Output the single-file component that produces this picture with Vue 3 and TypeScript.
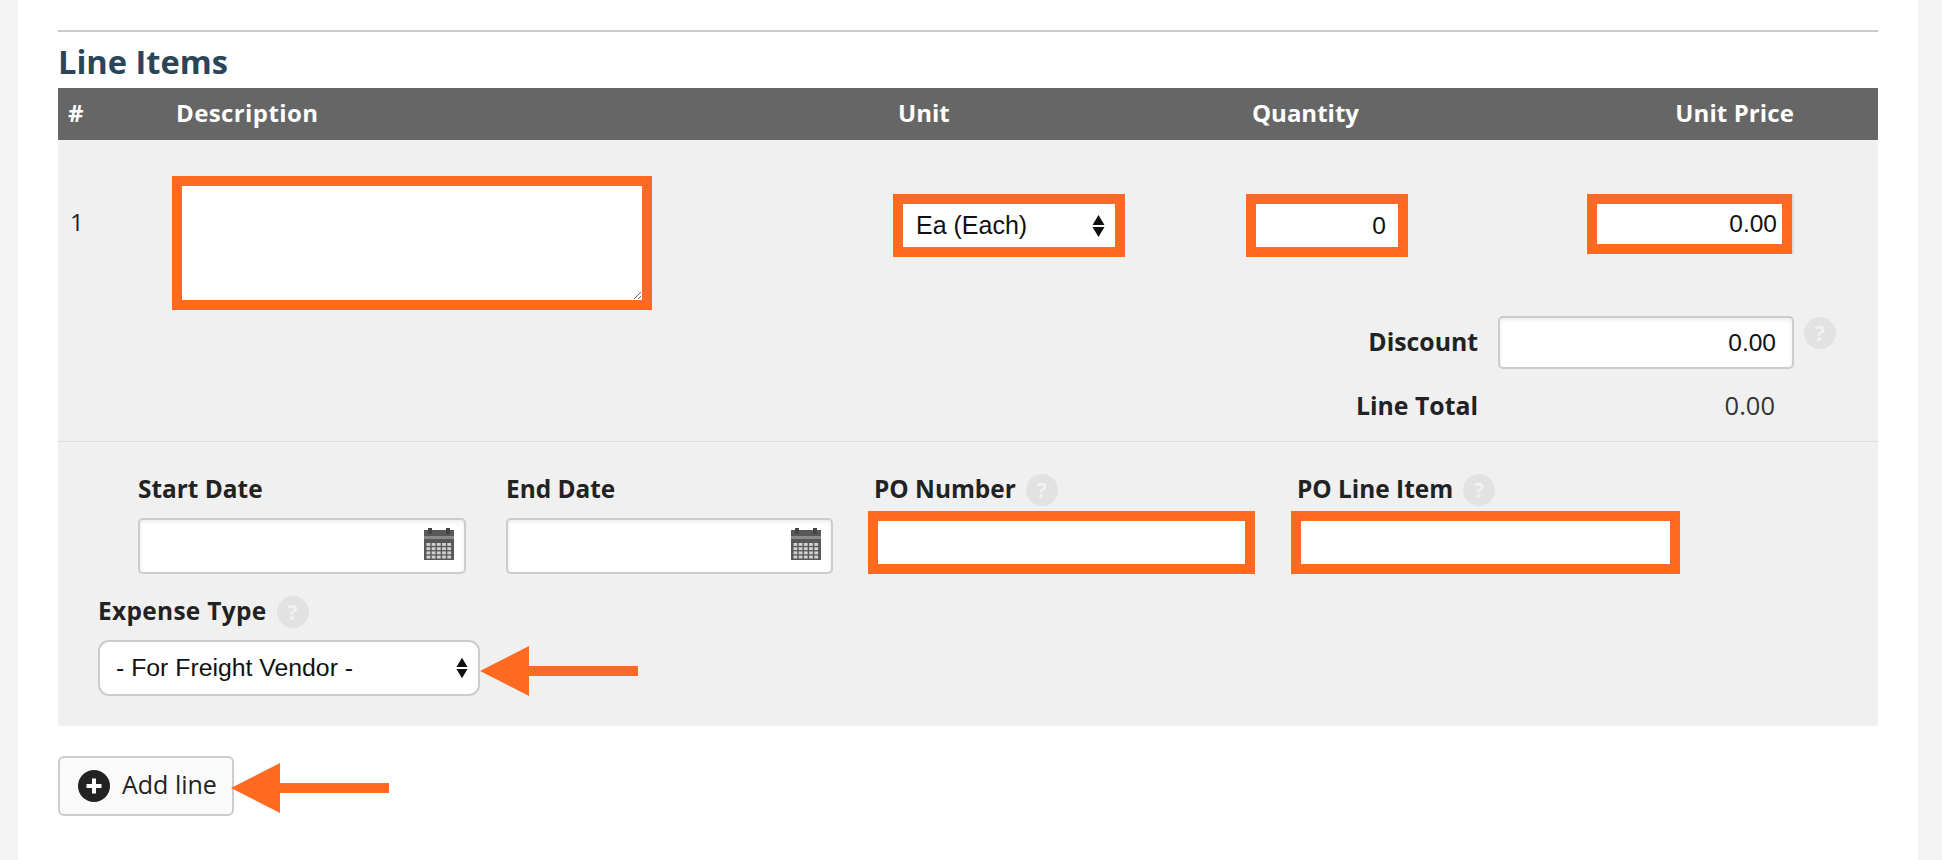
<script setup lang="ts">
const calendarCells: { x: number; y: number }[] = [];
for (let r = 0; r < 4; r++) {
  for (let c = 0; c < 5; c++) {
    calendarCells.push({ x: 2.5 + c * 5.2, y: 15 + r * 4.2 });
  }
}
const dateFields = ['Start Date', 'End Date'];
const poFields = [
  { label: 'PO Number', cls: 'po-number' },
  { label: 'PO Line Item', cls: 'po-line' },
];
</script>

<template>
  <div class="page">
    <main class="sheet">
      <hr class="rule" />
      <h2 class="title">Line Items</h2>

      <div class="cols head">
        <div class="h-num">#</div>
        <div class="h-desc">Description</div>
        <div class="h-unit">Unit</div>
        <div class="h-qty">Quantity</div>
        <div class="h-price">Unit Price</div>
      </div>

      <section class="panel">
        <div class="upper">
          <div class="cols item">
            <div class="num">1</div>
            <textarea class="desc marked"></textarea>
            <div class="select-wrap unit-wrap">
              <select class="unit marked">
                <option>Ea (Each)</option>
              </select>
              <svg class="updown" width="13" height="22" viewBox="0 0 13 22">
                <path d="M6.5 0L12.5 10H.5zM.5 12H12.5L6.5 22z" fill="#111" />
              </svg>
            </div>
            <input class="qty marked" type="text" value="0" />
            <input class="price marked" type="text" value="0.00" />
          </div>

          <div class="total-row discount-row">
            <label class="side-label">Discount</label>
            <input class="field discount" type="text" value="0.00" />
            <span class="help">?</span>
          </div>
          <div class="total-row line-total">
            <span class="side-label">Line Total</span>
            <span class="total-value">0.00</span>
          </div>
        </div>

        <div class="lower">
          <div class="fields">
            <div v-for="f in dateFields" :key="f" class="date-field">
              <div class="label-row"><label class="lbl">{{ f }}</label></div>
              <div class="date-box">
                <input class="field date" type="text" />
                <svg class="cal" width="30" height="32" viewBox="0 0 30 32">
                  <rect y="2" width="30" height="30" fill="#585858" />
                  <rect x="4" width="4" height="6" fill="#444" />
                  <rect x="22" width="4" height="6" fill="#444" />
                  <rect y="8" width="30" height="3" fill="#8a8a8a" />
                  <rect
                    v-for="(c, i) in calendarCells"
                    :key="i"
                    :x="c.x"
                    :y="c.y"
                    width="3.8"
                    height="2.9"
                    fill="#d0d0d0"
                  />
                </svg>
              </div>
            </div>
            <div v-for="f in poFields" :key="f.label" class="po-field" :class="f.cls">
              <div class="label-row">
                <label class="lbl">{{ f.label }}</label>
                <span class="help">?</span>
              </div>
              <input class="po marked" type="text" />
            </div>
          </div>

          <div class="expense">
            <div class="label-row">
              <label class="lbl expense-lbl">Expense Type</label>
              <span class="help">?</span>
            </div>
            <div class="select-wrap expense-wrap">
              <select class="expense-select">
                <option>- For Freight Vendor -</option>
              </select>
              <svg class="updown" width="12" height="22" viewBox="0 0 13 22">
                <path d="M6.5 0L12.5 10H.5zM.5 12H12.5L6.5 22z" fill="#111" />
              </svg>
              <svg class="arrow arrow-expense" width="158" height="50" viewBox="0 0 158 50">
                <path d="M0 25L49 0V20L158 20V30L49 30V50z" fill="#fe6a22" />
              </svg>
            </div>
          </div>
        </div>
      </section>

      <div class="add-wrap">
        <button class="add" type="button">
          <svg width="32" height="32" viewBox="0 0 32 32">
            <circle cx="16" cy="16" r="16" fill="#222" />
            <path d="M16 8.5V23.5M8.5 16H23.5" stroke="#fff" stroke-width="4" />
          </svg>
          <span class="add-text">Add line</span>
        </button>
        <svg class="arrow arrow-add" width="158" height="50" viewBox="0 0 158 50">
          <path d="M0 25L49 0V20L158 20V30L49 30V50z" fill="#fe6a22" />
        </svg>
      </div>
    </main>
  </div>
</template>

<style scoped>
.page {
  height: 860px;
  overflow: hidden;
  background: #f4f4f4;
  padding: 0 24px 0 18px;
  box-sizing: border-box;
  font-family: "Open Sans", "DejaVu Sans", sans-serif;
  color: #222;
}
.sheet {
  height: 860px;
  background: #fff;
  padding: 30px 40px 0;
  box-sizing: border-box;
}
.rule {
  margin: 0;
  border: 0;
  height: 2px;
  background: #ccc;
}
.title {
  margin: 0;
  height: 56px;
  line-height: 60px;
  font-size: 32.6px;
  font-weight: 700;
  color: #2a4558;
}
.cols {
  display: grid;
  grid-template-columns: 114px 721px 353px 341px 1fr;
}
.head {
  height: 52px;
  line-height: 50px;
  background: #666;
  color: #fff;
  font-size: 24px;
  font-weight: 700;
}
.h-num { padding-left: 10px; }
.h-desc { padding-left: 4px; letter-spacing: 0.4px; }
.h-unit { padding-left: 5px; }
.h-qty { padding-left: 6px; }
.h-price { text-align: right; padding-right: 84px; letter-spacing: 0.1px; }

.panel { background: #f0f0f0; }
.upper {
  height: 302px;
  padding-top: 36px;
  box-sizing: border-box;
  border-bottom: 1px solid #ddd;
}
.item { height: 134px; align-items: start; }
.num {
  padding-left: 12px;
  margin-top: 29px;
  line-height: 34px;
  font-size: 24px;
}
.marked {
  border: 10px solid #fe6a22;
  border-radius: 0;
  background: #fff;
  box-sizing: border-box;
  outline: 0;
  margin: 0;
  font-family: "Liberation Sans", Arial, sans-serif;
  font-size: 24.5px;
  color: #111;
}
.desc {
  display: block;
  width: 480px;
  height: 134px;
  padding: 0;
  resize: both;
}
.select-wrap { position: relative; }
.unit-wrap {
  width: 232px;
  height: 63px;
  margin-top: 18px;
}
.unit {
  display: block;
  width: 100%;
  height: 100%;
  padding: 0 0 2px 13px;
  font-size: 25px;
  appearance: none;
}
.updown {
  position: absolute;
  top: 50%;
  right: 20px;
  transform: translateY(-50%);
  pointer-events: none;
}
.qty {
  width: 162px;
  height: 63px;
  margin-top: 18px;
  padding: 0 12px 0 0;
  text-align: right;
}
.price {
  width: 205px;
  height: 60px;
  margin-top: 18px;
  padding: 0 5px 0 0;
  text-align: right;
  box-shadow: 2px 0 0 #ddd;
}
.total-row {
  display: flex;
  align-items: center;
  justify-content: flex-end;
  padding-right: 42px;
}
.discount-row {
  height: 53px;
  margin-top: 6px;
  gap: 20px;
}
.discount-row .help { margin: -19px 0 0 -10px; }
.side-label {
  padding-bottom: 4px;
  font-size: 24.8px;
  font-weight: 700;
  color: #222;
}
.field {
  border: 2px solid #ccc;
  border-radius: 5px;
  background: #fff;
  box-sizing: border-box;
  box-shadow: inset 0 2px 4px rgba(0, 0, 0, 0.08);
  outline: 0;
  margin: 0;
  font-family: "Liberation Sans", Arial, sans-serif;
  font-size: 24.5px;
  color: #111;
}
.discount {
  width: 296px;
  height: 53px;
  padding: 0 16px 0 0;
  text-align: right;
}
.help {
  display: inline-block;
  flex: none;
  width: 32px;
  height: 32px;
  line-height: 32px;
  border-radius: 50%;
  background: #e2e2e2;
  color: #f2f2f2;
  text-align: center;
  font-size: 21px;
  font-weight: 700;
}
.line-total {
  height: 30px;
  margin-top: 23px;
  gap: 20px;
  padding-right: 103px;
}
.total-value {
  width: 277px;
  padding-bottom: 4px;
  text-align: right;
  font-size: 25.5px;
  color: #333;
}
.lower {
  height: 284px;
  padding: 32px 0 0 40px;
  box-sizing: border-box;
}
.fields {
  display: flex;
  align-items: flex-start;
  margin-left: 40px;
}
.label-row {
  display: flex;
  align-items: center;
  gap: 10px;
  height: 32px;
}
.lbl {
  padding-bottom: 4px;
  font-size: 24.4px;
  font-weight: 700;
  color: #222;
}
.expense-lbl { letter-spacing: 0.35px; }
.date-field { width: 328px; margin-right: 40px; }
.date-field + .date-field { width: 327px; margin-right: 35px; }
.date-box {
  position: relative;
  margin-top: 12px;
}
.field.date {
  display: block;
  width: 100%;
  height: 56px;
}
.cal {
  position: absolute;
  top: 10px;
  right: 12px;
}
.po-field .label-row { padding-left: 6px; }
.po-number { width: 387px; margin-right: 36px; }
.po-line { width: 389px; }
.po {
  display: block;
  width: 100%;
  height: 63px;
  margin-top: 5px;
  padding: 0 8px;
}
.expense { margin-top: 22px; }
.expense-wrap {
  width: 382px;
  height: 56px;
  margin-top: 12px;
}
.expense-select {
  display: block;
  width: 100%;
  height: 100%;
  border: 2px solid #ccc;
  border-radius: 11px;
  background: #fff;
  box-sizing: border-box;
  padding: 0 0 2px 16px;
  appearance: none;
  outline: 0;
  font-family: "Liberation Sans", Arial, sans-serif;
  font-size: 24.8px;
  color: #111;
}
.expense-wrap .updown { right: 12px; }
.arrow {
  position: absolute;
  top: 50%;
  transform: translateY(-50%);
}
.arrow-expense { left: 100%; margin-top: 3px; }
.add-wrap {
  position: relative;
  width: 176px;
  height: 60px;
  margin-top: 30px;
}
.add {
  display: flex;
  align-items: center;
  gap: 12px;
  width: 100%;
  height: 100%;
  padding: 0 0 0 18px;
  border: 2px solid #ccc;
  border-radius: 6px;
  background: #fafafa;
  box-sizing: border-box;
  font-family: "Open Sans", "DejaVu Sans", sans-serif;
  color: #222;
}
.add-text {
  padding-bottom: 4px;
  font-size: 25px;
}
.arrow-add { left: calc(100% - 3px); margin-top: 2px; }
</style>

<style>
html, body { margin: 0; background: #f4f4f4; }
</style>
